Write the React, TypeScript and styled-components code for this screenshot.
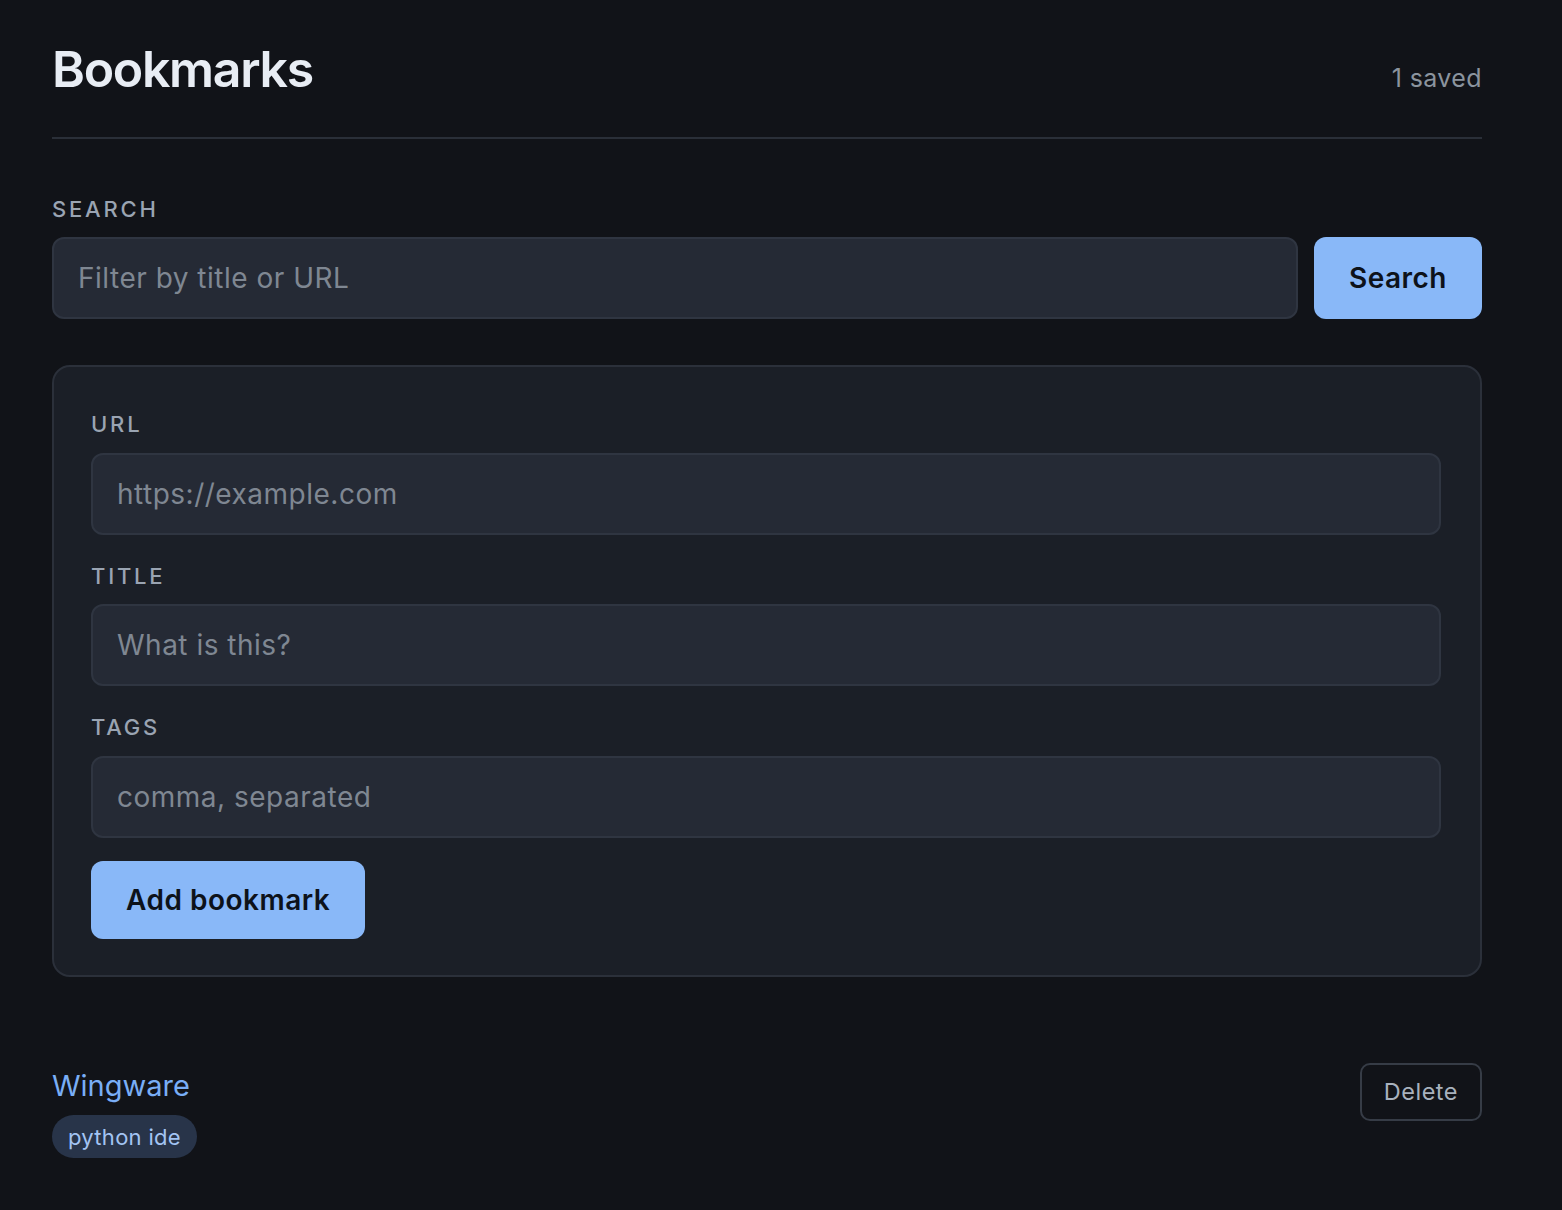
import styled, { createGlobalStyle } from 'styled-components';

const Global = createGlobalStyle`
  * { box-sizing: border-box; }
  html, body { margin: 0; background: #111318; }
  body { font-family: Inter, "Noto Sans", "Liberation Sans", sans-serif; color: #e6edf3; }
`;

const Page = styled.main`
  padding: 39px 80px 40px 52px;
  min-height: 1210px;
`;

const Header = styled.header`
  display: flex; justify-content: space-between; align-items: baseline;
  padding-bottom: 38px; border-bottom: 2px solid #2a2f38;
`;
const Title = styled.h1`
  margin: 0; font-size: 50px; font-weight: 600; letter-spacing: -1.3px; line-height: 1.2; color: #e8edf4;
`;
const Count = styled.span`
  font-size: 25px; letter-spacing: 0.4px; color: #8b949e;
`;

const Label = styled.label`
  display: block; font-size: 22px; font-weight: 500; letter-spacing: 2.8px;
  text-transform: uppercase; color: #9aa4b2; margin-bottom: 15px; line-height: 1.2;
`;

const SearchSection = styled.section`
  margin-top: 57px;
`;
const SearchRow = styled.div`
  display: flex; gap: 16px;
`;
const Input = styled.input`
  flex: 1; width: 100%; height: 82px; padding: 0 24px;
  background: #252a35; border: 2px solid #2f3541; border-radius: 12px;
  font-family: inherit; font-size: 28px; letter-spacing: 0.5px; color: #e6edf3; outline: none;
  &::placeholder { color: #7f8792; }
`;
const Button = styled.button<{ $h?: number }>`
  height: ${p => p.$h ?? 82}px; padding: 0 35px; border: none; border-radius: 12px;
  background: #89b8f8; color: #0d121a; font-family: inherit; font-size: 28px; font-weight: 600;
  letter-spacing: 0.5px; cursor: pointer; flex-shrink: 0;
`;

const Card = styled.form`
  margin-top: 46px; padding: 44px 39px 36px 37px; background: #1b1f27;
  border: 2px solid #2b303a; border-radius: 18px;
  display: flex; flex-direction: column; align-items: flex-start;
`;
const Field = styled.div`
  width: 100%; margin-bottom: 28px;
  &:nth-of-type(3) { margin-bottom: 23px; }
`;

const List = styled.ul`
  list-style: none; margin: 92px 0 0; padding: 0;
`;
const Item = styled.li`
  display: flex; justify-content: space-between; align-items: flex-start;
`;
const Info = styled.div`
  display: flex; flex-direction: column; align-items: flex-start; gap: 12px;
`;
const Link = styled.a`
  font-size: 29px; color: #79aef6; text-decoration: none; line-height: 1.2;
`;
const Tag = styled.span`
  display: inline-flex; align-items: center; height: 43px; padding: 0 16px;
  border-radius: 999px; background: #283449; color: #a3c4f3; font-size: 22px; letter-spacing: 0.3px;
`;
const Ghost = styled.button`
  height: 58px; padding: 0 22px; background: transparent; border: 2px solid #363c46;
  border-radius: 10px; color: #a8b1bd; font-family: inherit; font-size: 23.5px; letter-spacing: 0.5px;
  cursor: pointer; margin-top: -6px;
`;

export default function App() {
  return (
    <>
      <Global />
      <Page>
        <Header>
          <Title>Bookmarks</Title>
          <Count>1 saved</Count>
        </Header>

        <SearchSection>
          <Label htmlFor="q">Search</Label>
          <SearchRow>
            <Input id="q" placeholder="Filter by title or URL" />
            <Button type="button">Search</Button>
          </SearchRow>
        </SearchSection>

        <Card onSubmit={e => e.preventDefault()}>
          <Field>
            <Label htmlFor="url">URL</Label>
            <Input id="url" placeholder="https://example.com" />
          </Field>
          <Field>
            <Label htmlFor="title">Title</Label>
            <Input id="title" placeholder="What is this?" />
          </Field>
          <Field>
            <Label htmlFor="tags">Tags</Label>
            <Input id="tags" placeholder="comma, separated" />
          </Field>
          <Button type="submit" $h={78}>Add bookmark</Button>
        </Card>

        <List>
          <Item>
            <Info>
              <Link href="#">Wingware</Link>
              <Tag>python ide</Tag>
            </Info>
            <Ghost type="button">Delete</Ghost>
          </Item>
        </List>
      </Page>
    </>
  );
}
